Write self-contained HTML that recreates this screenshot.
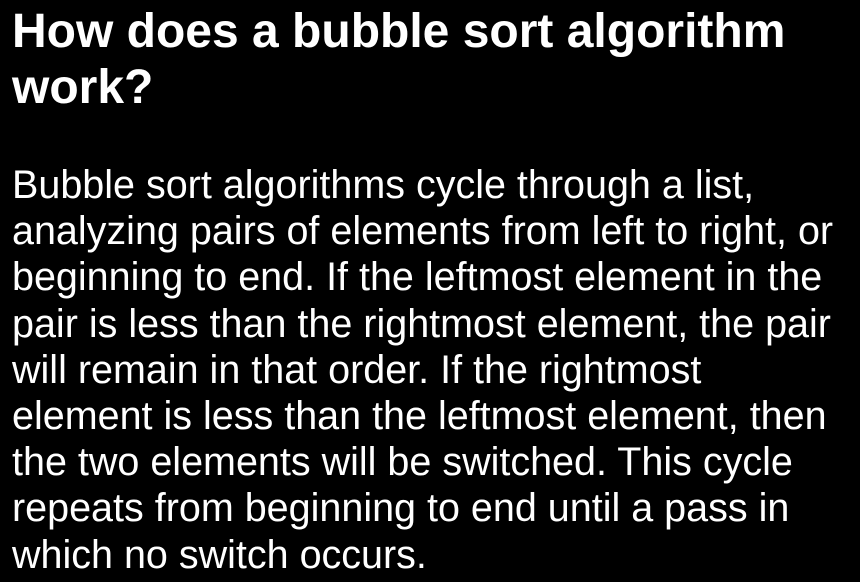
<!DOCTYPE html>
<html><head><meta charset="utf-8"><style>
html,body{margin:0;padding:0;background:#000;width:860px;height:582px;overflow:hidden}
body{font-family:"Liberation Sans",Arial,sans-serif;color:#fff}
h1{position:absolute;left:12px;top:4px;margin:0;font-size:48px;line-height:56px;font-weight:bold;white-space:nowrap}
p{position:absolute;left:12px;top:162px;margin:0;font-size:39.5px;line-height:46.2px;white-space:nowrap}
</style></head><body>
<h1>How does a bubble sort algorithm<br>work?</h1>
<p>Bubble sort algorithms cycle through a list,<br>analyzing pairs of elements from left to right, or<br>beginning to end. If the leftmost element in the<br>pair is less than the rightmost element, the pair<br>will remain in that order. If the rightmost<br>element is less than the leftmost element, then<br>the two elements will be switched. This cycle<br>repeats from beginning to end until a pass in<br>which no switch occurs.</p>
</body></html>
